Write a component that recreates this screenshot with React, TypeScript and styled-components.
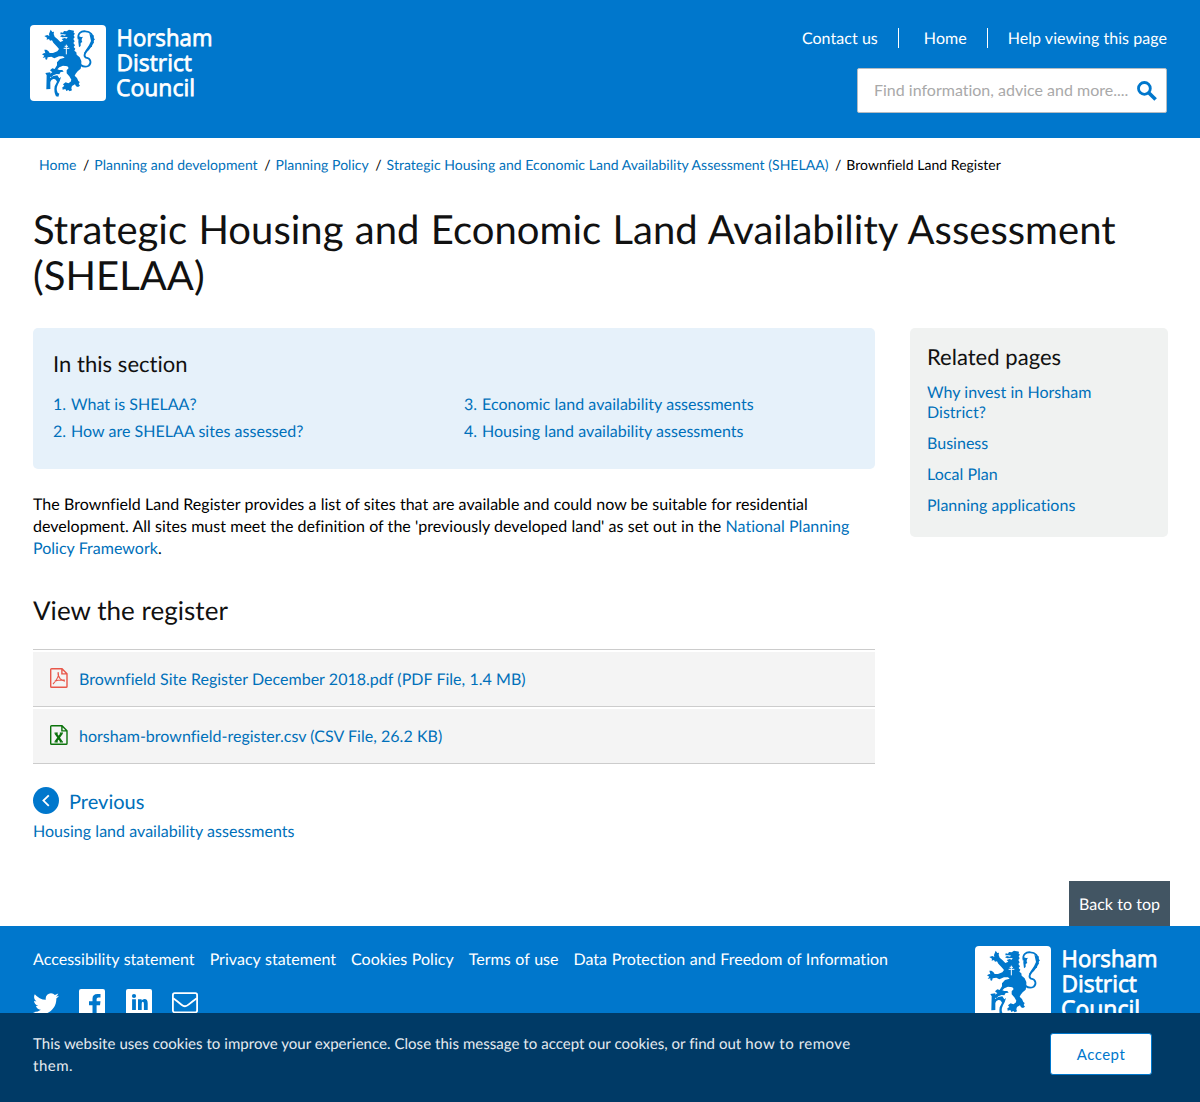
import React from "react";
import styled, { createGlobalStyle } from "styled-components";

const blue = "#0077cc";
const link = "#0070ba";

const Global = createGlobalStyle`
  *, *::before, *::after { box-sizing: border-box; }
  body {
    margin: 0;
    background: #fff;
    color: #000;
    font: 16px/20px Lato, "Open Sans", sans-serif;
    font-variant-ligatures: none;
    letter-spacing: 0.02px;
    word-spacing: 0.1px;
    text-rendering: geometricPrecision;
  }
  h1, h2, h3, p, ul, ol { margin: 0; padding: 0; font-weight: 400; list-style: none; }
  a { color: ${link}; text-decoration: none; }
`;

const Header = styled.header`
  display: flex;
  justify-content: space-between;
  height: 138px;
  padding: 25px 33px 0 30px;
  background: ${blue};
`;
const HeaderTools = styled.div`
  display: flex;
  flex-direction: column;
  align-items: flex-end;
  gap: 20px;
  padding-top: 3px;
`;
const TopNav = styled.nav`
  display: flex;
  letter-spacing: 0.05px;
  word-spacing: 0;
`;
const TopLink = styled.a<{ $lead?: number }>`
  height: 20px;
  line-height: 22px;
  color: #fff;
  padding-left: ${(p) => p.$lead ?? 0}px;
  & + & { border-left: 1px solid #fff; margin-left: 20px; }
`;
const Search = styled.form`
  display: flex;
  align-items: center;
  width: 310px;
  height: 45px;
  padding: 0 9px 0 16px;
  border: 1px solid #b5bcc2;
  border-radius: 2px;
  background: #fff;
`;
const SearchInput = styled.input`
  width: 254px;
  height: 43px;
  margin-right: 9px;
  padding: 0 0 2px;
  border: 0;
  outline: 0;
  background: none;
  font: inherit;
  letter-spacing: 0;
  &::placeholder { color: #a9a9a9; }
`;
const LogoSvg = styled.svg`
  display: block;
  flex: none;
  width: 190px;
  height: 80px;
  overflow: visible;
`;

const Crumbs = styled.ol`
  display: flex;
  padding: 17px 39px 0;
  font-size: 14px;
`;
const Crumb = styled.li`
  & + &::before { content: "/"; padding: 0 5px 0 6.5px; }
`;

const Title = styled.h1`
  padding: 31px 33px 0;
  font-size: 40px;
  line-height: 46px;
  letter-spacing: 0.03px;
  word-spacing: 1px;
  color: #111;
`;
const Columns = styled.div`
  display: grid;
  grid-template-columns: 842px 258px;
  column-gap: 35px;
  align-items: start;
  height: 553px;
  margin-top: 30px;
  padding: 0 33px;
`;
const SectionBox = styled.section`
  height: 141px;
  padding: 23px 20px 0;
  border-radius: 5px;
  background: #e6f1fa;
`;
const BoxTitle = styled.h2`
  font-size: 22px;
  line-height: 26px;
  color: #111;
`;
const Contents = styled.ol`
  display: grid;
  grid-template-columns: 411px 1fr;
  grid-template-rows: repeat(2, 27px);
  grid-auto-flow: column;
  margin-top: 14px;
  line-height: 27px;
`;
const ContentsItem = styled.li`
  display: flex;
  color: ${link};
`;
const ItemNumber = styled.span`
  width: 18px;
`;
const Intro = styled.p`
  margin-top: 25px;
  line-height: 22px;
`;
const RegisterTitle = styled.h2`
  margin-top: 34px;
  font-size: 26px;
  line-height: 32px;
  color: #111;
`;
const Files = styled.ul`
  margin-top: 23px;
  border-top: 1px solid #ccc;
`;
const FileRow = styled.li`
  display: flex;
  align-items: center;
  gap: 11px;
  height: 55px;
  margin-top: 2px;
  padding-left: 17px;
  border-bottom: 1px solid #ccc;
  background: #f4f4f4;
`;
const FileLink = styled.a`
  padding-top: 2px;
`;
const FileSvg = styled.svg`
  width: 18px;
  height: 20px;
  margin-bottom: 2px;
`;
const Previous = styled.a`
  display: flex;
  align-items: flex-start;
  gap: 10px;
  height: 30px;
  margin-top: 23px;
  font-size: 20px;
  line-height: 27px;
`;
const PreviousLabel = styled.span`
  padding-top: 2px;
`;
const PreviousPage = styled.a`
  display: block;
  margin-top: 5px;
`;

const Related = styled.aside`
  height: 209px;
  padding: 16px 17px 0;
  border-radius: 5px;
  background: #f0f2f1;
`;
const RelatedList = styled.ul`
  display: flex;
  flex-direction: column;
  gap: 11px;
  width: 200px;
  margin-top: 13px;
`;

const TopBar = styled.div`
  display: flex;
  justify-content: flex-end;
  padding-right: 30px;
`;
const BackToTop = styled.a`
  height: 45px;
  padding: 14px 10px 0;
  background: #425563;
  color: #fff;
  width: 101px;
  white-space: nowrap;
`;
const Footer = styled.footer`
  display: flex;
  justify-content: space-between;
  height: 176px;
  padding: 20px 35px 0 33px;
  background: ${blue};
`;
const FooterLinks = styled.nav`
  display: flex;
  gap: 15px;
  padding-top: 4px;
  word-spacing: 0.5px;
`;
const FooterLink = styled.a`
  color: #fff;
`;
const Social = styled.div`
  display: flex;
  gap: 20.4px;
  margin-top: 19px;
`;
const SocialSvg = styled.svg`
  width: 26px;
  height: 26px;
  fill: #fff;
`;

const CookieBar = styled.div`
  position: fixed;
  left: 0;
  right: 0;
  bottom: 0;
  display: flex;
  justify-content: space-between;
  align-items: flex-start;
  height: 89px;
  padding: 20px 48px 0 33px;
  background: #003a66;
  color: #e6ebf0;
  font-size: 15px;
  line-height: 22px;
`;
const CookieText = styled.p`
  width: 830px;
`;
const CookieLink = styled.a`
  color: #e6ebf0;
  letter-spacing: 0.5px;
`;
const Accept = styled.button`
  width: 102px;
  height: 42px;
  padding: 0 0 1px;
  border: 1.5px solid ${blue};
  border-radius: 3px;
  background: #fff;
  color: ${blue};
  font: 15px/20px Lato, sans-serif;
  letter-spacing: 0.5px;
`;

function Logo() {
  return (
    <LogoSvg viewBox="0 0 190 80" role="img" aria-label="Horsham District Council">
      <rect width="76" height="76" rx="4" fill="#fff" />
      <g transform="translate(-2 -3) scale(.33333)" fill={blue}>
        <path d="M68 23 L73 30 L78 29 L77 36 L80 44 L89 52 L97 60 L106 56 L101 51 L110 48 L116 50 L119 45 L103 46 L96 43 L102 39 L110 41 L115 38 L107 37 L97 37 L98 31 L105 32 L108 27 L116 28 L123 23 L138 26 L137 32 L141 35 L137 40 L140 46 L136 51 L140 58 L136 63 L141 70 L137 75 L142 80 L139 86 L145 91 L146 98 L155 106 L160 117 L160 130 L158 140 L149 148 L143 155 L140 161 L147 168 L151 177 L155 180 L152 186 L156 191 L150 195 L144 193 L141 187 L132 192 L130 199 L132 205 L125 208 L121 204 L115 207 L112 201 L104 203 L103 196 L109 192 L105 187 L113 181 L121 184 L128 179 L130 173 L124 163 L116 154 L116 145 L122 138 L118 133 L105 131 L94 136 L88 142 L94 144 L103 144 L107 149 L98 150 L94 157 L86 156 L76 160 L70 166 L63 163 L66 155 L73 151 L66 145 L73 139 L80 141 L87 130 L87 121 L96 111 L110 107 L105 103 L93 103 L79 109 L70 104 L59 106 L57 113 L52 112 L52 106 L44 108 L49 101 L42 97 L49 93 L52 94 L49 83 L55 83 L61 87 L65 93 L75 93 L88 88 L93 81 L86 73 L76 62 L72 55 L66 56 L63 51 L56 53 L57 47 L49 42 L58 39 L64 42 L63 36 L65 31 Z" />
        <path d="M152 52 C147 34 160 26 173 28 C187 28 196 40 195 50 C195 62 189 73 181 81 C171 92 165 101 174 107 C189 109 191 124 182 131 C172 137 162 132 157 128" fill="none" stroke={blue} strokeWidth="5.500" />
        <path d="M184 34 L191 40 L197 40 L196 47 L201 52 L196 57 L198 63 L192 67 L192 74 L186 76 L183 84 L176 89 L171 97 L168 93 L174 83 L183 70 L189 57 Z" />
        <path d="M152 42 Q157 46 165 44 Q158 53 163 60 L158 63 L158 72 L153 76 L151 59 Z" />
        <path d="M52 153 L67 151 L66 168 Q75 160 88 160 L94 169 L99 165 Q97 175 90 187 Q83 202 89 212 L94 215 L91 224 L84 223 Q77 210 80 193 L87 179 Q84 169 76 171 Q69 172 67 180 L67 201 L55 202 L56 160 Z" />
        <path d="M115 68 V97 M107 79 H124 M110 73 H120" fill="none" stroke="#fff" strokeWidth="3" />
      </g>
      <g fill="#fff" stroke="#fff" strokeWidth=".75" fontFamily="Open Sans, sans-serif" fontSize="23">
        <text x="86.500" y="21" textLength="96" lengthAdjust="spacingAndGlyphs">Horsham</text>
        <text x="86.500" y="46.300" textLength="75.500" lengthAdjust="spacingAndGlyphs">District</text>
        <text x="86" y="71.300" textLength="79" lengthAdjust="spacingAndGlyphs">Council</text>
      </g>
    </LogoSvg>
  );
}

function SearchIcon() {
  return (
    <svg width="20" height="20" viewBox="0 0 20 20" fill="none" stroke={blue}>
      <circle cx="7.4" cy="7.4" r="5.9" strokeWidth="2.8" />
      <path d="M12 12 L18.6 18.6" strokeWidth="3.6" />
    </svg>
  );
}

function FileIcon({ kind }: { kind: "pdf" | "csv" }) {
  const color = kind === "pdf" ? "#e8574a" : "#0b720b";
  return (
    <FileSvg viewBox="0 0 18 20" fill="none" stroke={color} strokeWidth="1.4">
      <path d="M1.6 .7 H12 L17 5.8 V18.4 Q17 19.3 16.1 19.3 H1.6 Q.7 19.3 .7 18.4 V1.6 Q.7 .7 1.6 .7 Z M11.9 .9 V5.9 H17" />
      {kind === "pdf" ? (
        <path d="M8.2 4.2 Q9 6.5 7.7 9.4 Q6 13.2 3 16 M8.2 4.2 Q7.4 7.5 10.1 10.6 Q12 12.6 15 13.2 M4.7 13.3 Q8.5 11.5 14.8 12.1" strokeWidth="1.1" />
      ) : (
        <path d="M5.6 8.3 L11.4 16.7 M11.7 8.3 L5.7 16.7" strokeWidth="2.3" />
      )}
      {kind === "csv" && <path d="M4.5 8.1 H7.8 M9.8 8.1 H13 M4.5 16.9 H7.8 M9.8 16.9 H13" strokeWidth="1.2" />}
    </FileSvg>
  );
}

const crumbs = ["Home", "Planning and development", "Planning Policy", "Strategic Housing and Economic Land Availability Assessment (SHELAA)"];
const contents = ["What is SHELAA?", "How are SHELAA sites assessed?", "Economic land availability assessments", "Housing land availability assessments"];
const related = ["Why invest in Horsham District?", "Business", "Local Plan", "Planning applications"];
const footerLinks = ["Accessibility statement", "Privacy statement", "Cookies Policy", "Terms of use", "Data Protection and Freedom of Information"];

export default function App() {
  return (
    <>
      <Global />
      <Header>
        <Logo />
        <HeaderTools>
          <TopNav>
            <TopLink href="#">Contact us</TopLink>
            <TopLink href="#" $lead={25}>Home</TopLink>
            <TopLink href="#" $lead={20}>Help viewing this page</TopLink>
          </TopNav>
          <Search>
            <SearchInput placeholder="Find information, advice and more...." />
            <SearchIcon />
          </Search>
        </HeaderTools>
      </Header>
      <main>
        <Crumbs>
          {crumbs.map((c) => <Crumb key={c}><a href="#">{c}</a></Crumb>)}
          <Crumb>Brownfield Land Register</Crumb>
        </Crumbs>
        <Title>Strategic Housing and Economic Land Availability Assessment (SHELAA)</Title>
        <Columns>
          <div>
            <SectionBox>
              <BoxTitle>In this section</BoxTitle>
              <Contents>
                {contents.map((c, i) => (
                  <ContentsItem key={c}><ItemNumber>{i + 1}.</ItemNumber><a href="#">{c}</a></ContentsItem>
                ))}
              </Contents>
            </SectionBox>
            <Intro>
              The Brownfield Land Register provides a list of sites that are available and could now be suitable for residential
              development. All sites must meet the definition of the 'previously developed land' as set out in the{" "}
              <a href="#">National Planning Policy Framework</a>.
            </Intro>
            <RegisterTitle>View the register</RegisterTitle>
            <Files>
              <FileRow><FileIcon kind="pdf" /><FileLink href="#">Brownfield Site Register December 2018.pdf (PDF File, 1.4 MB)</FileLink></FileRow>
              <FileRow><FileIcon kind="csv" /><FileLink href="#">horsham-brownfield-register.csv (CSV File, 26.2 KB)</FileLink></FileRow>
            </Files>
            <Previous href="#">
              <svg width="26" height="27" viewBox="0 0 26 27">
                <ellipse cx="13" cy="13.5" rx="13" ry="13.5" fill={blue} />
                <path d="M15.8 8.3 L10.4 13.6 L15.8 18.9" fill="none" stroke="#fff" strokeWidth="1.8" />
              </svg>
              <PreviousLabel>Previous</PreviousLabel>
            </Previous>
            <PreviousPage href="#">Housing land availability assessments</PreviousPage>
          </div>
          <Related>
            <BoxTitle>Related pages</BoxTitle>
            <RelatedList>
              {related.map((r) => <li key={r}><a href="#">{r}</a></li>)}
            </RelatedList>
          </Related>
        </Columns>
        <TopBar><BackToTop href="#">Back to top</BackToTop></TopBar>
      </main>
      <Footer>
        <div>
          <FooterLinks>
            {footerLinks.map((f) => <FooterLink key={f} href="#">{f}</FooterLink>)}
          </FooterLinks>
          <Social>
            <SocialSvg viewBox="108 0 1576 1576">
              <path d="M1684 408q-67 98-162 167 1 14 1 42 0 130-38 259.500t-115.500 248.500-184.500 210.500-258 146-323 54.500q-271 0-496-145 35 4 78 4 225 0 401-138-105-2-188-64.500t-114-159.500q33 5 61 5 43 0 85-11-112-23-185.500-111.500t-73.500-205.500v-4q68 38 146 41-66-44-105-115t-39-154q0-88 44-163 121 149 294.500 238.500t371.500 99.500q-8-38-8-74 0-134 94.500-228.500t228.500-94.500q140 0 236 102 109-21 205-78-37 115-142 178 93-10 186-50z" />
            </SocialSvg>
            <SocialSvg viewBox="0 0 26 26">
              <path d="M2 0 H24 Q26 0 26 2 V24 Q26 26 24 26 H17.600 V16.200 H21 L21.500 12.300 H17.600 V10 Q17.600 8.500 19.300 8.500 H21.500 V5 H18.500 Q13.500 5 13.500 9.600 V12.300 H10 V16.200 H13.500 V26 H2 Q0 26 0 24 V2 Q0 0 2 0 Z" />
            </SocialSvg>
            <SocialSvg viewBox="0 0 26 26">
              <rect width="26" height="26" rx="2" />
              <g fill={blue}>
                <circle cx="8" cy="7" r="2.1" />
                <path d="M6.100 10.200 H9.900 V21 H6.100 Z M12 10.200 H15.600 V11.600 Q16.700 9.900 18.500 9.900 Q21.700 9.900 21.700 14.200 V21 H17.900 V15 Q17.900 12.800 16.800 12.800 Q15.700 12.800 15.700 15 V21 H12 Z" />
              </g>
            </SocialSvg>
            <SocialSvg viewBox="0 0 26 26">
              <rect x=".9" y="4.200" width="24.200" height="19.200" rx="1.800" fill="none" stroke="#fff" strokeWidth="1.800" />
              <path d="M1.200 9.200 Q5.500 12.300 9.500 15.700 Q13 18.800 16.500 15.700 Q20.500 12.300 24.800 9.200" fill="none" stroke="#fff" strokeWidth="1.800" />
            </SocialSvg>
          </Social>
        </div>
        <Logo />
      </Footer>
      <CookieBar>
        <CookieText>
          This website uses cookies to improve your experience. Close this message to accept our cookies, or find out{" "}
          <CookieLink href="#">how to remove them.</CookieLink>
        </CookieText>
        <Accept>Accept</Accept>
      </CookieBar>
    </>
  );
}
